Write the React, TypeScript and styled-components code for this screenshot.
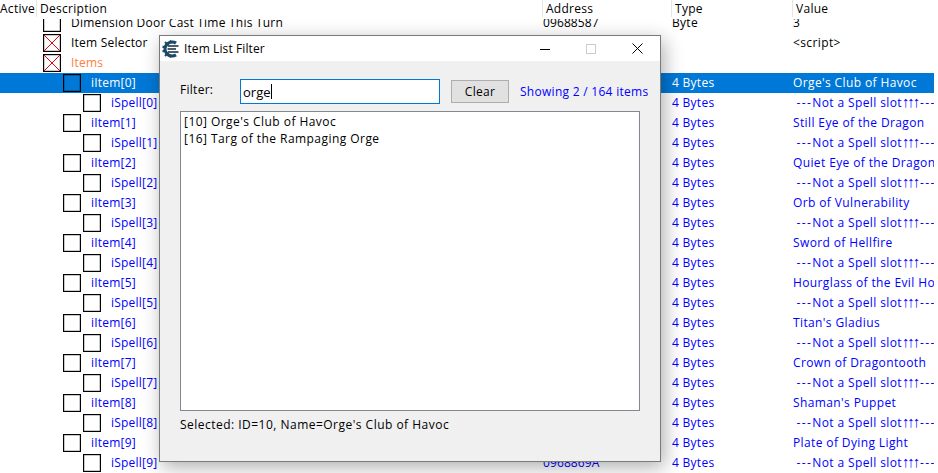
import React from "react";
import styled, { createGlobalStyle } from "styled-components";

const Global = createGlobalStyle`
  html, body { margin: 0; padding: 0; background: #fff; }
  body { font-family: "Open Sans", "Noto Sans", sans-serif; font-size: 12px; letter-spacing: 0.28px; color: #000; }
`;

const Page = styled.div`
  position: relative;
  width: 938px;
  height: 473px;
  overflow: hidden;
  background: #fff;
  display: flex;
  flex-direction: column;
`;

const Header = styled.div`
  display: grid;
  grid-template-columns: 37px 506px 129px 121px 145px;
  height: 19px;
  flex: none;
`;

const HeaderCell = styled.div<{ $plain?: boolean }>`
  line-height: 17px;
  height: 17px;
  padding-left: ${(p) => (p.$plain ? 0 : 3)}px;
  border-right: 1px solid #e5e5e5;
  box-sizing: border-box;
  white-space: nowrap;
  &:last-child {
    border-right: none;
  }
`;

const Viewport = styled.div`
  flex: 1;
  width: 934px;
  overflow: hidden;
`;

const RowList = styled.div`
  margin-top: -6px;
`;

const Row = styled.div<{ $selected?: boolean; $tone: string }>`
  display: grid;
  grid-template-columns: 543px 129px 121px 141px;
  height: 20px;
  line-height: 20px;
  white-space: pre;
  background: ${(p) => (p.$selected ? "#0078d7" : "transparent")};
  color: ${(p) => (p.$selected ? "#fff" : p.$tone)};
`;

const DescCell = styled.div<{ $level: number }>`
  display: flex;
  align-items: center;
  padding-left: ${(p) => 43 + p.$level * 20}px;
  letter-spacing: 0.22px;
`;

const Check = styled.svg`
  flex: none;
  width: 18px;
  height: 18px;
  margin-right: 10px;
  display: block;
`;

const Cell = styled.div`
  overflow: hidden;
`;

const AddressCell = styled(Cell)`
  letter-spacing: 0.1px;
`;

const ValueCell = styled(Cell)`
  letter-spacing: 0.38px;
`;

const Dashes = styled.span`
  letter-spacing: 1.4px;
`;

const Arrows = styled.span`
  font-family: "Liberation Sans", sans-serif;
  font-size: 15px;
  line-height: 0;
  letter-spacing: -2.1px;
  margin-right: 2px;
`;

const Dialog = styled.div`
  position: absolute;
  left: 159px;
  top: 35px;
  width: 502px;
  height: 427px;
  box-sizing: border-box;
  border: 1px solid #7a7a7a;
  background: #f0f0f0;
  box-shadow: 3px 5px 18px rgba(0, 0, 0, 0.32);
  display: flex;
  flex-direction: column;
`;

const TitleBar = styled.div`
  height: 25px;
  flex: none;
  background: #fff;
  display: flex;
  align-items: center;
  padding-left: 2px;
`;

const TitleText = styled.div`
  margin-left: 4px;
  flex: 1;
  letter-spacing: 0.1px;
`;

const WindowButton = styled.div`
  width: 46px;
  height: 25px;
  display: flex;
  align-items: center;
  justify-content: center;
`;

const Body = styled.div`
  flex: 1;
  padding: 18px 20px 0;
  display: flex;
  flex-direction: column;
`;

const FilterRow = styled.div`
  display: flex;
  align-items: center;
  height: 25px;
`;

const FilterLabel = styled.div`
  width: 60px;
  margin-top: -5px;
  flex: none;
`;

const FilterInput = styled.div`
  width: 200px;
  height: 25px;
  flex: none;
  box-sizing: border-box;
  border: 1px solid #0078d7;
  background: #fff;
  padding-left: 2px;
  line-height: 22px;
  font-size: 13px;
  letter-spacing: 0;
  display: flex;
  align-items: center;
`;

const Caret = styled.span`
  display: inline-block;
  width: 1px;
  height: 15px;
  background: #000;
`;

const ClearButton = styled.div`
  width: 58px;
  height: 23px;
  flex: none;
  box-sizing: border-box;
  margin-left: 11px;
  border: 1px solid #adadad;
  background: #e1e1e1;
  text-align: center;
  line-height: 21px;
`;

const Count = styled.div`
  margin-left: 11px;
  color: #0000ff;
  white-space: nowrap;
`;

const ListBox = styled.div`
  margin-top: 7px;
  width: 460px;
  height: 300px;
  box-sizing: border-box;
  border: 1px solid #828790;
  background: #fff;
  padding: 1px 3px;
  letter-spacing: 0.45px;
`;

const ListItem = styled.div`
  line-height: 17px;
`;

const Status = styled.div`
  margin-top: 5px;
  line-height: 17px;
  letter-spacing: 0.48px;
`;

type RowData = {
  level: number;
  name: string;
  type?: string;
  value?: React.ReactNode;
  address?: string;
  crossed?: boolean;
  selected?: boolean;
  tone?: string;
};

const items = [
  "Orge's Club of Havoc",
  "Still Eye of the Dragon",
  "Quiet Eye of the Dragon",
  "Orb of Vulnerability",
  "Sword of Hellfire",
  "Hourglass of the Evil Hour",
  "Titan's Gladius",
  "Crown of Dragontooth",
  "Shaman's Puppet",
  "Plate of Dying Light",
];

const notSpell = (
  <>
    {" "}
    <Dashes>---</Dashes>
    {"Not a Spell slot"}
    <Arrows>↑↑↑</Arrows>
    <Dashes>---</Dashes>
  </>
);

const rows: RowData[] = [
  { level: 0, name: "Dimension Door Cast Time This Turn", address: "09688587", type: "Byte", value: "3", tone: "#000" },
  { level: 0, name: "Item Selector", value: "<script>", crossed: true, tone: "#000" },
  { level: 0, name: "Items", crossed: true, tone: "#ff8040" },
];
items.forEach((item, i) => {
  rows.push({ level: 1, name: `iItem[${i}]`, type: "4 Bytes", value: item, selected: i === 0 });
  rows.push({
    level: 2,
    name: `iSpell[${i}]`,
    type: "4 Bytes",
    value: notSpell,
    address: i === 9 ? "0968869A" : undefined,
  });
});

const CheckBox = ({ crossed }: { crossed?: boolean }) => (
  <Check viewBox="0 0 18 18">
    <rect x="0.6" y="0.6" width="16.8" height="16.8" fill="none" stroke="#000" strokeWidth="1.2" />
    {crossed && <path d="M1 1L17 17M17 1L1 17" stroke="#e8000b" strokeWidth="1" fill="none" />}
  </Check>
);

const Logo = () => (
  <svg width="18" height="18" viewBox="0 0 18 18">
    <path d="M14 3.2A7 7 0 1 0 14 14.8" fill="none" stroke="#1a4a68" strokeWidth="3.2" />
    <path
      d="M8 0.5L9.5 3M3 2L5 4.2M0.5 6.5L3 7.5M0.5 11.5L3 10.5M3 16L5 13.8M8 17.5L9.5 15"
      stroke="#1a4a68"
      strokeWidth="2"
      fill="none"
    />
    <path d="M6 6H16.5M5.5 9H14M6 12H16.5" stroke="#10293c" strokeWidth="1.7" fill="none" />
  </svg>
);

export default function App() {
  return (
    <Page>
      <Global />
      <Header>
        <HeaderCell $plain>Active</HeaderCell>
        <HeaderCell>Description</HeaderCell>
        <HeaderCell>Address</HeaderCell>
        <HeaderCell>Type</HeaderCell>
        <HeaderCell>Value</HeaderCell>
      </Header>
      <Viewport>
        <RowList>
          {rows.map((r) => (
            <Row key={r.name} $selected={r.selected} $tone={r.tone ?? "#0000ff"}>
              <DescCell $level={r.level}>
                <CheckBox crossed={r.crossed} />
                {r.name}
              </DescCell>
              <AddressCell>{r.address}</AddressCell>
              <Cell>{r.type}</Cell>
              <ValueCell>{r.value}</ValueCell>
            </Row>
          ))}
        </RowList>
      </Viewport>
      <Dialog>
        <TitleBar>
          <Logo />
          <TitleText>Item List Filter</TitleText>
          <WindowButton>
            <svg width="10" height="10" viewBox="0 0 10 10">
              <path d="M0 5.5H10" stroke="#000" strokeWidth="1" />
            </svg>
          </WindowButton>
          <WindowButton>
            <svg width="10" height="10" viewBox="0 0 10 10">
              <rect x="0.5" y="0.5" width="9" height="9" fill="none" stroke="#ccc" />
            </svg>
          </WindowButton>
          <WindowButton>
            <svg width="11" height="11" viewBox="0 0 11 11">
              <path d="M0.5 0.5L10.5 10.5M10.5 0.5L0.5 10.5" stroke="#000" strokeWidth="1" />
            </svg>
          </WindowButton>
        </TitleBar>
        <Body>
          <FilterRow>
            <FilterLabel>Filter:</FilterLabel>
            <FilterInput>
              orge
              <Caret />
            </FilterInput>
            <ClearButton>Clear</ClearButton>
            <Count>Showing 2 / 164 items</Count>
          </FilterRow>
          <ListBox>
            <ListItem>[10] Orge's Club of Havoc</ListItem>
            <ListItem>[16] Targ of the Rampaging Orge</ListItem>
          </ListBox>
          <Status>Selected: ID=10, Name=Orge's Club of Havoc</Status>
        </Body>
      </Dialog>
    </Page>
  );
}
